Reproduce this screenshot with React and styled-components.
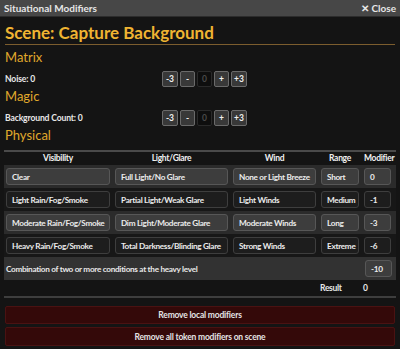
import React from "react";
import styled, { createGlobalStyle } from "styled-components";

const GlobalStyle = createGlobalStyle`
  html, body {
    margin: 0;
    padding: 0;
    background: #121212;
  }
  body {
    font-family: Lato, "Liberation Sans", sans-serif;
  }
`;

const Window = styled.div`
  width: 400px;
  height: 349px;
  display: flex;
  flex-direction: column;
  background: #141414;
  color: #e8e8e8;
  overflow: hidden;
`;

const TitleBar = styled.header`
  height: 17px;
  box-sizing: border-box;
  background: #474747;
  border-bottom: 1px solid #2c2c2c;
  display: flex;
  align-items: center;
  justify-content: space-between;
  padding: 0 4px;
  font-size: 10px;
  font-weight: 700;
  color: #e6e6e6;
`;

const CloseLink = styled.span`
  display: flex;
  align-items: center;
  gap: 2px;
`;

const Content = styled.div`
  flex: 1;
  padding: 0 5px;
  display: flex;
  flex-direction: column;
  font-size: 8.2px;
  letter-spacing: -0.3px;
`;

const Title = styled.h1`
  margin: 6px 0 0;
  padding-bottom: 1px;
  font-size: 17px;
  line-height: 20px;
  font-weight: 700;
  letter-spacing: 0;
  color: #f0b432;
  border-bottom: 1px solid #7c5d2e;
`;

const Section = styled.h2`
  margin: ${(p) => p.$gap}px 0 0;
  font-size: 13px;
  line-height: 14px;
  font-weight: 400;
  letter-spacing: 0;
  color: #e0a92c;
`;

const StepRow = styled.div`
  display: grid;
  grid-template-columns: 157px auto;
  align-items: center;
  margin-top: 7px;
  font-size: 8.6px;
  letter-spacing: -0.15px;
  font-weight: 700;
`;

const Steps = styled.div`
  display: flex;
  gap: 2px;
`;

const StepButton = styled.button`
  width: ${(p) => (p.$wide ? 16 : 15)}px;
  height: 16px;
  padding: 0;
  box-sizing: border-box;
  border-radius: 2px;
  border: 1px solid ${(p) => (p.$value ? "#2a2a2a" : "#6a6a6a")};
  background: ${(p) => (p.$value ? "#0e0e0e" : "#383838")};
  color: ${(p) => (p.$value ? "#4a4a4a" : "#f0f0f0")};
  font-family: inherit;
  font-size: 8.5px;
  font-weight: 700;
`;

const Table = styled.div`
  margin: 8px -1px 0;
  border-top: 2px solid #4a4a4a;
`;

const Grid = styled.div`
  display: grid;
  grid-template-columns: 104px 113px 83px 38px 27px;
  column-gap: 5px;
  align-items: center;
  padding: ${(p) => (p.$head ? "0 2px" : "3px 2px")};
  height: ${(p) => (p.$head ? "13px" : "auto")};
  background: ${(p) => (p.$shade === "light" ? "#2b2b2b" : p.$shade === "dark" ? "#171717" : "transparent")};
`;

const HeadCell = styled.div`
  text-align: center;
  line-height: 13px;
  font-size: 8.5px;
  font-weight: 700;
  white-space: nowrap;
  color: #f0f0f0;
`;

const Choice = styled.button`
  height: 17px;
  box-sizing: border-box;
  text-align: left;
  padding: 0 4px 0 5px;
  border-radius: 3px;
  font-family: inherit;
  font-size: 8.2px;
  letter-spacing: -0.3px;
  font-weight: 700;
  color: #ececec;
  white-space: nowrap;
  overflow: hidden;
  border: 1px solid ${(p) => (p.$dark ? "#3e3e3e" : "#575757")};
  background: ${(p) => (p.$dark ? "#1d1d1d" : "#3d3d3d")};
`;

const ComboRow = styled.div`
  display: flex;
  align-items: center;
  justify-content: space-between;
  height: 23px;
  box-sizing: border-box;
  padding: 0 4px 0 2px;
  background: #323232;
  font-weight: 700;
`;

const ComboValue = styled(Choice)`
  width: 27px;
`;

const ResultRow = styled.div`
  display: grid;
  grid-template-columns: 1fr 43px 33px;
  align-items: center;
  height: 16px;
  font-size: 8.5px;
  font-weight: 700;
  border-bottom: 2px solid #3e3e3e;
`;

const ResultLabel = styled.span`
  grid-column: 2;
`;

const Actions = styled.div`
  display: flex;
  flex-direction: column;
  gap: 3px;
  margin-top: 8px;
`;

const DangerButton = styled.button`
  height: ${(p) => (p.$tall ? 19 : 18)}px;
  box-sizing: border-box;
  border: 1px solid #4a1212;
  border-radius: 2px;
  background: #340909;
  color: #e4e4e4;
  font-family: inherit;
  font-size: 8.5px;
  letter-spacing: -0.2px;
  font-weight: 700;
`;

const rows = [
  ["Clear", "Full Light/No Glare", "None or Light Breeze", "Short", "0"],
  ["Light Rain/Fog/Smoke", "Partial Light/Weak Glare", "Light Winds", "Medium", "-1"],
  ["Moderate Rain/Fog/Smoke", "Dim Light/Moderate Glare", "Moderate Winds", "Long", "-3"],
  ["Heavy Rain/Fog/Smoke", "Total Darkness/Blinding Glare", "Strong Winds", "Extreme", "-6"],
];

const Stepper = ({ label }) => (
  <StepRow>
    <span>{label}</span>
    <Steps>
      <StepButton $wide>-3</StepButton>
      <StepButton>-</StepButton>
      <StepButton $value>0</StepButton>
      <StepButton>+</StepButton>
      <StepButton $wide>+3</StepButton>
    </Steps>
  </StepRow>
);

export default function App() {
  return (
    <Window>
      <GlobalStyle />
      <TitleBar>
        <span>Situational Modifiers</span>
        <CloseLink>
          <span>✕</span>
          <span>Close</span>
        </CloseLink>
      </TitleBar>
      <Content>
        <Title>Scene: Capture Background</Title>
        <Section $gap={5}>Matrix</Section>
        <Stepper label="Noise: 0" />
        <Section $gap={2}>Magic</Section>
        <Stepper label="Background Count: 0" />
        <Section $gap={2}>Physical</Section>
        <Table>
          <Grid $head>
            <HeadCell>Visibility</HeadCell>
            <HeadCell>Light/Glare</HeadCell>
            <HeadCell>Wind</HeadCell>
            <HeadCell>Range</HeadCell>
            <HeadCell>Modifier</HeadCell>
          </Grid>
          {rows.map((row, i) => (
            <Grid key={row[0]} $shade={i % 2 ? "dark" : "light"}>
              {row.map((cell) => (
                <Choice key={cell} $dark={i % 2 === 1}>
                  {cell}
                </Choice>
              ))}
            </Grid>
          ))}
          <ComboRow>
            <span>Combination of two or more conditions at the heavy level</span>
            <ComboValue>-10</ComboValue>
          </ComboRow>
          <ResultRow>
            <ResultLabel>Result</ResultLabel>
            <span>0</span>
          </ResultRow>
        </Table>
        <Actions>
          <DangerButton>Remove local modifiers</DangerButton>
          <DangerButton $tall>Remove all token modifiers on scene</DangerButton>
        </Actions>
      </Content>
    </Window>
  );
}
